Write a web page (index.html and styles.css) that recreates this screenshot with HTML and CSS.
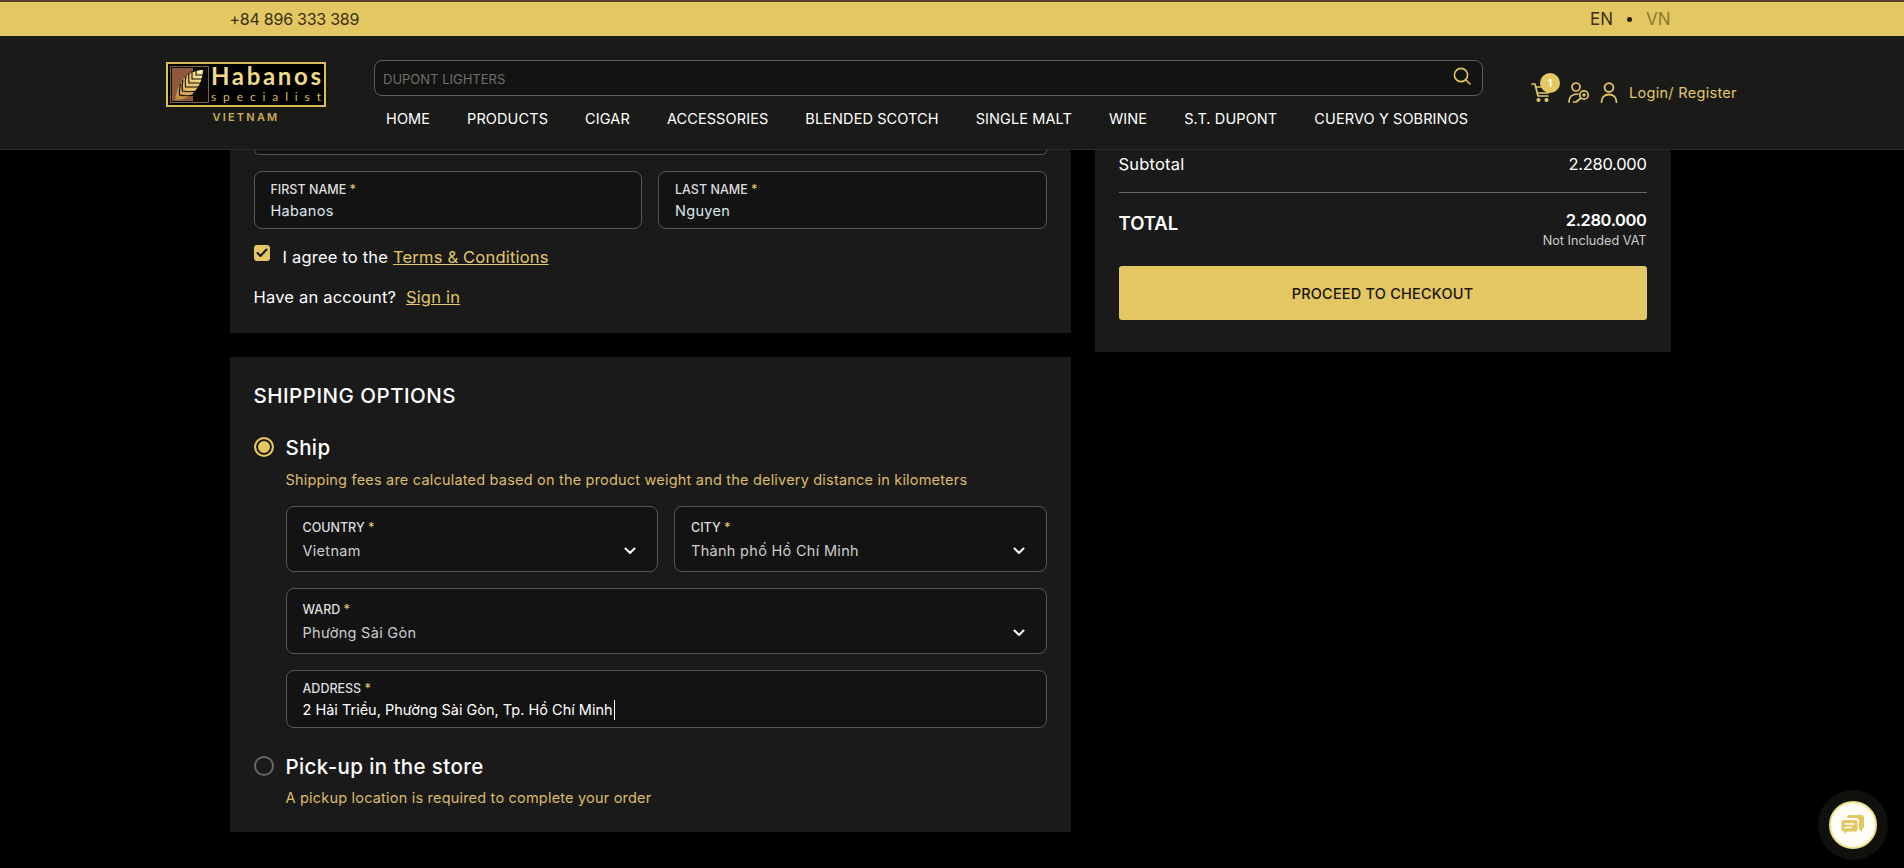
FILE: index.html
```html
<!DOCTYPE html>
<html lang="en">
<head>
    <meta charset="UTF-8">
    <title>Habanos Specialist Vietnam - Cart</title>
    <link rel="stylesheet" href="styles.css">
</head>
<body>
    <header class="header">
        <div class="topbar">
            <div class="wrap topbar-row">
                <span class="phone">+84 896 333 389</span>
                <div class="lang">
                    <span>EN</span>
                    <i class="lang-dot"></i>
                    <span class="lang-off">VN</span>
                </div>
            </div>
        </div>
        <div class="mainbar">
            <div class="logo">
                <svg class="logo-mark" viewBox="0 0 160 45" width="160" height="45">
                    <defs>
                        <linearGradient id="leafGold" x1="1" y1="0" x2="0" y2="1">
                            <stop offset="0" stop-color="#fbf0a8"/>
                            <stop offset="0.6" stop-color="#e2b95a"/>
                            <stop offset="1" stop-color="#b97f3a"/>
                        </linearGradient>
                    </defs>
                    <rect x="1" y="1" width="158" height="43" fill="#000" stroke="#d9bd5c" stroke-width="2"/>
                    <rect x="4.500" y="4.500" width="38" height="36" fill="#0c0a08" stroke="#7d6436"/>
                    <rect x="6" y="6" width="21" height="33" fill="#8f5a3c"/>
                    <path d="M37 8 C24 8 12 18 9 38 C22 38 36 28 37 8Z" fill="url(#leafGold)"/>
                    <g fill="none" stroke="#0c0a08" stroke-width="1.100">
                        <path d="M37 13 H30 V8"/>
                        <path d="M37 17 H26 V9"/>
                        <path d="M36 21 H23 C22.500 18 22.500 15 23 11"/>
                        <path d="M35 25 H19.500 C18.800 21 19 18 20 14"/>
                        <path d="M33 29 C26 30 20 30 16.500 29 C15.500 25 16 22 17 18"/>
                        <path d="M29 33 C23 34 17 34 13.500 33 C13 29 13.500 26 14.500 22"/>
                    </g>
                    <text class="logo-big" x="45" y="23" textLength="110" lengthAdjust="spacing">Habanos</text>
                    <text class="logo-small" x="45" y="39" textLength="110" lengthAdjust="spacing">specialist</text>
                </svg>
                <span class="logo-country">VIETNAM</span>
            </div>
            <div class="head-center">
                <div class="search">
                    <span class="search-text">DUPONT LIGHTERS</span>
                    <svg width="20" height="20" viewBox="0 0 20 20" fill="none" stroke="#e2c763" stroke-width="1.600" stroke-linecap="round">
                        <circle cx="9" cy="9" r="6.600"/>
                        <path d="M14 14 L18 18"/>
                    </svg>
                </div>
                <nav class="nav">
                    <a>HOME</a>
                    <a>PRODUCTS</a>
                    <a>CIGAR</a>
                    <a>ACCESSORIES</a>
                    <a>BLENDED SCOTCH</a>
                    <a>SINGLE MALT</a>
                    <a>WINE</a>
                    <a>S.T. DUPONT</a>
                    <a>CUERVO Y SOBRINOS</a>
                </nav>
            </div>
            <div class="head-actions">
                <div class="cart">
                    <svg width="20" height="22" viewBox="0 0 20 22" fill="none" stroke="#e2c763" stroke-width="1.700" stroke-linecap="round" stroke-linejoin="round">
                        <path d="M1 3 H4 L7 15 H17"/>
                        <path d="M5 6 H19 L17 12 H6.500"/>
                        <circle cx="7.500" cy="19" r="1.200" fill="#e2c763"/>
                        <circle cx="15.500" cy="19" r="1.200" fill="#e2c763"/>
                    </svg>
                    <span class="badge">1</span>
                </div>
                <svg class="icon-key" width="22" height="21" viewBox="0 0 22 21" fill="none" stroke="#e2c763" stroke-width="1.700" stroke-linecap="round" stroke-linejoin="round">
                    <circle cx="8" cy="5" r="4"/>
                    <path d="M1 20 C1 14 4 12 10 12"/>
                    <circle cx="16" cy="13" r="4.200"/>
                    <circle cx="16" cy="13" r="0.800"/>
                    <path d="M13 16 L8 20 H5.500"/>
                </svg>
                <svg class="icon-user" width="18" height="21" viewBox="0 0 18 21" fill="none" stroke="#e2c763" stroke-width="1.800" stroke-linecap="round">
                    <circle cx="9" cy="5.500" r="4.400"/>
                    <path d="M1.500 20 C1.500 15 5 12.500 9 12.500 C13 12.500 16.500 15 16.500 20"/>
                </svg>
                <span class="login">Login/ Register</span>
            </div>
        </div>
    </header>

    <main class="wrap content">
        <div class="col-left">
            <section class="card card-account">
                <div class="field-stub"></div>
                <div class="row">
                    <div class="field field-text">
                        <label>FIRST NAME <b>*</b></label>
                        <span class="value">Habanos</span>
                    </div>
                    <div class="field field-text">
                        <label>LAST NAME <b>*</b></label>
                        <span class="value">Nguyen</span>
                    </div>
                </div>
                <div class="agree">
                    <span class="checkbox">
                        <svg width="12" height="10" viewBox="0 0 12 10" fill="none" stroke="#1a1a1a" stroke-width="2" stroke-linecap="round" stroke-linejoin="round">
                            <path d="M1.500 5 L4.500 8 L10.500 1.500"/>
                        </svg>
                    </span>
                    <span>I agree to the <a class="link">Terms &amp; Conditions</a></span>
                </div>
                <p class="signin">Have an account?&nbsp; <a class="link">Sign in</a></p>
            </section>

            <section class="card card-shipping">
                <h2>SHIPPING OPTIONS</h2>
                <div class="option">
                    <span class="radio radio-on"></span>
                    <span class="option-name">Ship</span>
                </div>
                <div class="option-body">
                    <p class="hint">Shipping fees are calculated based on the product weight and the delivery distance in kilometers</p>
                    <div class="row">
                        <div class="field field-select">
                            <label>COUNTRY <b>*</b></label>
                            <span class="value">Vietnam</span>
                            <svg class="chevron" width="12" height="8" viewBox="0 0 12 8" fill="none" stroke="#fff" stroke-width="2" stroke-linecap="round" stroke-linejoin="round"><path d="M1.500 1.500 L6 6 L10.500 1.500"/></svg>
                        </div>
                        <div class="field field-select">
                            <label>CITY <b>*</b></label>
                            <span class="value">Thành phố Hồ Chí Minh</span>
                            <svg class="chevron" width="12" height="8" viewBox="0 0 12 8" fill="none" stroke="#fff" stroke-width="2" stroke-linecap="round" stroke-linejoin="round"><path d="M1.500 1.500 L6 6 L10.500 1.500"/></svg>
                        </div>
                    </div>
                    <div class="field field-select">
                        <label>WARD <b>*</b></label>
                        <span class="value">Phường Sài Gòn</span>
                        <svg class="chevron" width="12" height="8" viewBox="0 0 12 8" fill="none" stroke="#fff" stroke-width="2" stroke-linecap="round" stroke-linejoin="round"><path d="M1.500 1.500 L6 6 L10.500 1.500"/></svg>
                    </div>
                    <div class="field field-text">
                        <label>ADDRESS <b>*</b></label>
                        <span class="value value-active">2 Hải Triều, Phường Sài Gòn, Tp. Hồ Chí Minh</span>
                    </div>
                </div>
                <div class="option option-pickup">
                    <span class="radio"></span>
                    <span class="option-name">Pick-up in the store</span>
                </div>
                <div class="option-body">
                    <p class="hint hint-pickup">A pickup location is required to complete your order</p>
                </div>
            </section>
        </div>

        <aside class="card card-summary">
            <div class="sum-row">
                <span class="sum-label">Subtotal</span>
                <span class="sum-price">2.280.000</span>
            </div>
            <div class="sum-total">
                <span class="total-label">TOTAL</span>
                <div class="total-right">
                    <span class="total-price">2.280.000</span>
                    <span class="total-note">Not Included VAT</span>
                </div>
            </div>
            <button class="checkout">PROCEED TO CHECKOUT</button>
        </aside>
    </main>

    <div class="chat">
        <svg width="24" height="22" viewBox="0 0 24 22" fill="#e2c763">
            <path d="M8 1 H20 A3 3 0 0 1 23 4 V12 A3 3 0 0 1 21 15 V18 L18 15 V7 A3 3 0 0 0 15 4 H6 A3 3 0 0 1 8 1Z"/>
            <path d="M3 6 H14 A2.500 2.500 0 0 1 16.500 8.500 V15 A2.500 2.500 0 0 1 14 17.500 H6 L3.500 20.500 V17.500 H3 A2.500 2.500 0 0 1 0.500 15 V8.500 A2.500 2.500 0 0 1 3 6Z"/>
            <path d="M3.500 10 H13.500 M3.500 13.500 H11" stroke="#fff" stroke-width="1.400"/>
        </svg>
    </div>
</body>
</html>
```
FILE: styles.css
```css
* {
    box-sizing: border-box;
}

html, body {
    height: 100%;
}

body {
    margin: 0;
    background: #000;
    color: #fff;
    font-family: 'Inter', 'Noto Sans', sans-serif;
    overflow: hidden;
    padding-right: 4px;
}

.wrap {
    width: 1441px;
    margin: 0 auto;
}

/* header */
.header {
    position: relative;
    margin-right: -4px;
    border-bottom: 1px solid #2a2a26;
}

.topbar {
    height: 36px;
    border-top: 2px solid #5b4030;
    background: #e2c763;
    padding-right: 4px;
}

.topbar-row {
    display: flex;
    justify-content: space-between;
    align-items: center;
    height: 34px;
    font-size: 16px;
    color: #3a2f12;
}

.phone {
    letter-spacing: -0.25px;
}

.lang {
    display: flex;
    align-items: center;
    gap: 14px;
    font-size: 17px;
}

.lang-dot {
    width: 5px;
    height: 5px;
    background: #2a2110;
    border-radius: 50%;
}

.lang-off {
    color: #8f7a30;
}

.mainbar {
    display: flex;
    height: 113px;
    background: #1a1a18;
}

.logo {
    display: flex;
    flex-direction: column;
    align-items: center;
    width: 160px;
    margin: 26px 48px 0 166px;
}

.logo-mark {
    display: block;
}

.logo-big {
    font-family: 'Lato', sans-serif;
    font-size: 24px;
    font-weight: 700;
    fill: #efd98a;
}

.logo-small {
    font-family: 'Lato', sans-serif;
    font-size: 12px;
    fill: #d9bd5c;
}

.logo-country {
    margin-top: 3px;
    font-size: 11px;
    font-weight: 600;
    letter-spacing: 2.200px;
    color: #c9ad55;
}

.head-center {
    width: 1109px;
    padding-top: 24px;
}

.search {
    display: flex;
    justify-content: space-between;
    align-items: center;
    height: 36px;
    padding: 0 10px 0 8px;
    background: #131311;
    border: 1px solid #5d5d59;
    border-radius: 8px;
}

.search svg {
    margin-top: -4px;
}

.search-text {
    margin-top: 1px;
    font-size: 13px;
    color: #6f6f6b;
}

.nav {
    display: flex;
    gap: 37px;
    margin-top: 14px;
    padding-left: 12px;
    font-size: 14.500px;
    font-weight: 400;
    letter-spacing: 0.1px;
    white-space: nowrap;
}

.head-actions {
    display: flex;
    align-items: center;
    height: 114px;
    margin-top: -1px;
    margin-left: 48px;
    color: #e2c763;
}

.cart {
    position: relative;
    width: 37px;
    height: 22px;
}

.badge {
    position: absolute;
    left: 9px;
    top: -8px;
    width: 20px;
    height: 20px;
    line-height: 20px;
    border-radius: 50%;
    background: #e2c763;
    color: #fff;
    font-size: 10px;
    font-weight: 700;
    text-align: center;
}

.icon-user {
    margin-left: 10px;
}

.login {
    margin-left: 11px;
    font-size: 14.500px;
    font-weight: 400;
    letter-spacing: 0.3px;
    white-space: nowrap;
}

/* content */
.content {
    display: flex;
    align-items: flex-start;
    gap: 24px;
}

.col-left {
    display: flex;
    flex-direction: column;
    gap: 24px;
    width: 841px;
    flex: none;
}

.card {
    background: #1a1a1a;
    padding: 0 24px;
}

.card-account {
    height: 183px;
}

.field-stub {
    height: 5px;
    border: 1px solid #555;
    border-top: none;
    border-radius: 0 0 8px 8px;
    background: #131313;
    margin-bottom: 16px;
}

.row {
    display: flex;
    gap: 16px;
}

.row .field {
    flex: 1;
}

.field {
    position: relative;
    display: flex;
    flex-direction: column;
    padding: 0 16px;
    background: #131313;
    border: 1px solid #555;
    border-radius: 8px;
}

.field-text {
    height: 58px;
    padding-top: 9px;
}

.field-select {
    height: 66px;
    padding-top: 12px;
}

.field label {
    font-size: 12.500px;
    line-height: 17px;
    font-weight: 500;
    color: #ddd;
}

.field label b {
    font-weight: 500;
    color: #e2c763;
}

.value {
    font-size: 14.500px;
    line-height: 20px;
    margin-top: 3px;
    letter-spacing: 0.3px;
    color: #dce6ea;
}

.field-select .value {
    margin-top: 5px;
    color: #ccc;
}

.value-active {
    color: #fff;
    align-self: flex-start;
    letter-spacing: 0;
    padding-right: 1px;
    border-right: 1px solid #fff;
}

.chevron {
    position: absolute;
    right: 21px;
    top: 40px;
}

.agree {
    display: flex;
    gap: 13px;
    margin-top: 17px;
    font-size: 16.500px;
    line-height: 22px;
    letter-spacing: 0.2px;
}

.checkbox {
    display: flex;
    align-items: center;
    justify-content: center;
    width: 16px;
    height: 16px;
    margin-top: -1px;
    background: #e2c763;
    border-radius: 3px;
}

.link {
    color: #e2c763;
    text-decoration: underline;
}

.signin {
    margin: 18px 0 0;
    font-size: 16.500px;
    line-height: 22px;
    letter-spacing: 0.2px;
}

.card-shipping {
    height: 475px;
    padding-top: 27px;
}

.card-shipping h2 {
    margin: 0 0 25px;
    font-size: 20.500px;
    line-height: 24px;
    font-weight: 500;
    letter-spacing: 0.5px;
}

.option {
    display: flex;
    align-items: center;
    gap: 12px;
    height: 28px;
}

.option-name {
    font-size: 20.500px;
    font-weight: 500;
    letter-spacing: 0.4px;
}

.radio {
    width: 20px;
    height: 20px;
    border: 2px solid #666;
    border-radius: 50%;
}

.radio-on {
    border-color: #e2c763;
    background: #e2c763;
    box-shadow: inset 0 0 0 2px #1a1a1a;
}

.option-body {
    display: flex;
    flex-direction: column;
    gap: 16px;
    margin-left: 32px;
}

.hint {
    margin: 9px 0 0;
    font-size: 14.500px;
    line-height: 20px;
    letter-spacing: 0.2px;
    color: #dcbc68;
}

.hint-pickup {
    margin-top: 8px;
}

.option-pickup {
    margin-top: 24px;
}

/* summary */
.card-summary {
    flex: 1;
    height: 202px;
    padding-top: 0;
}

.sum-row {
    display: flex;
    justify-content: space-between;
    align-items: center;
    height: 43px;
    border-bottom: 1px solid #666;
    padding-bottom: 15px;
    font-size: 16.500px;
}

.sum-label {
    letter-spacing: 0.2px;
}

.sum-price {
    letter-spacing: -0.3px;
}

.sum-total {
    display: flex;
    justify-content: space-between;
    padding-top: 17px;
}

.total-label {
    font-size: 18.500px;
    font-weight: 600;
    padding-top: 2px;
}

.total-right {
    display: flex;
    flex-direction: column;
    align-items: flex-end;
}

.total-price {
    font-size: 16.500px;
    font-weight: 600;
    line-height: 20px;
    letter-spacing: -0.4px;
}

.total-note {
    font-size: 12.700px;
    line-height: 20px;
    margin-top: 1px;
    color: #ccc;
}

.checkout {
    display: block;
    width: 100%;
    height: 54px;
    margin-top: 15px;
    background: #e2c763;
    color: #1a1408;
    border: none;
    border-radius: 3px;
    font-family: inherit;
    font-size: 14.500px;
    font-weight: 500;
    letter-spacing: 0.2px;
}

/* chat bubble */
.chat {
    position: fixed;
    right: 27px;
    bottom: 19px;
    display: flex;
    align-items: center;
    justify-content: center;
    width: 48px;
    height: 48px;
    background: #fffdf5;
    border: 2px solid #efe08a;
    border-radius: 50%;
    box-shadow: 0 0 0 11px #10100c;
}
```
